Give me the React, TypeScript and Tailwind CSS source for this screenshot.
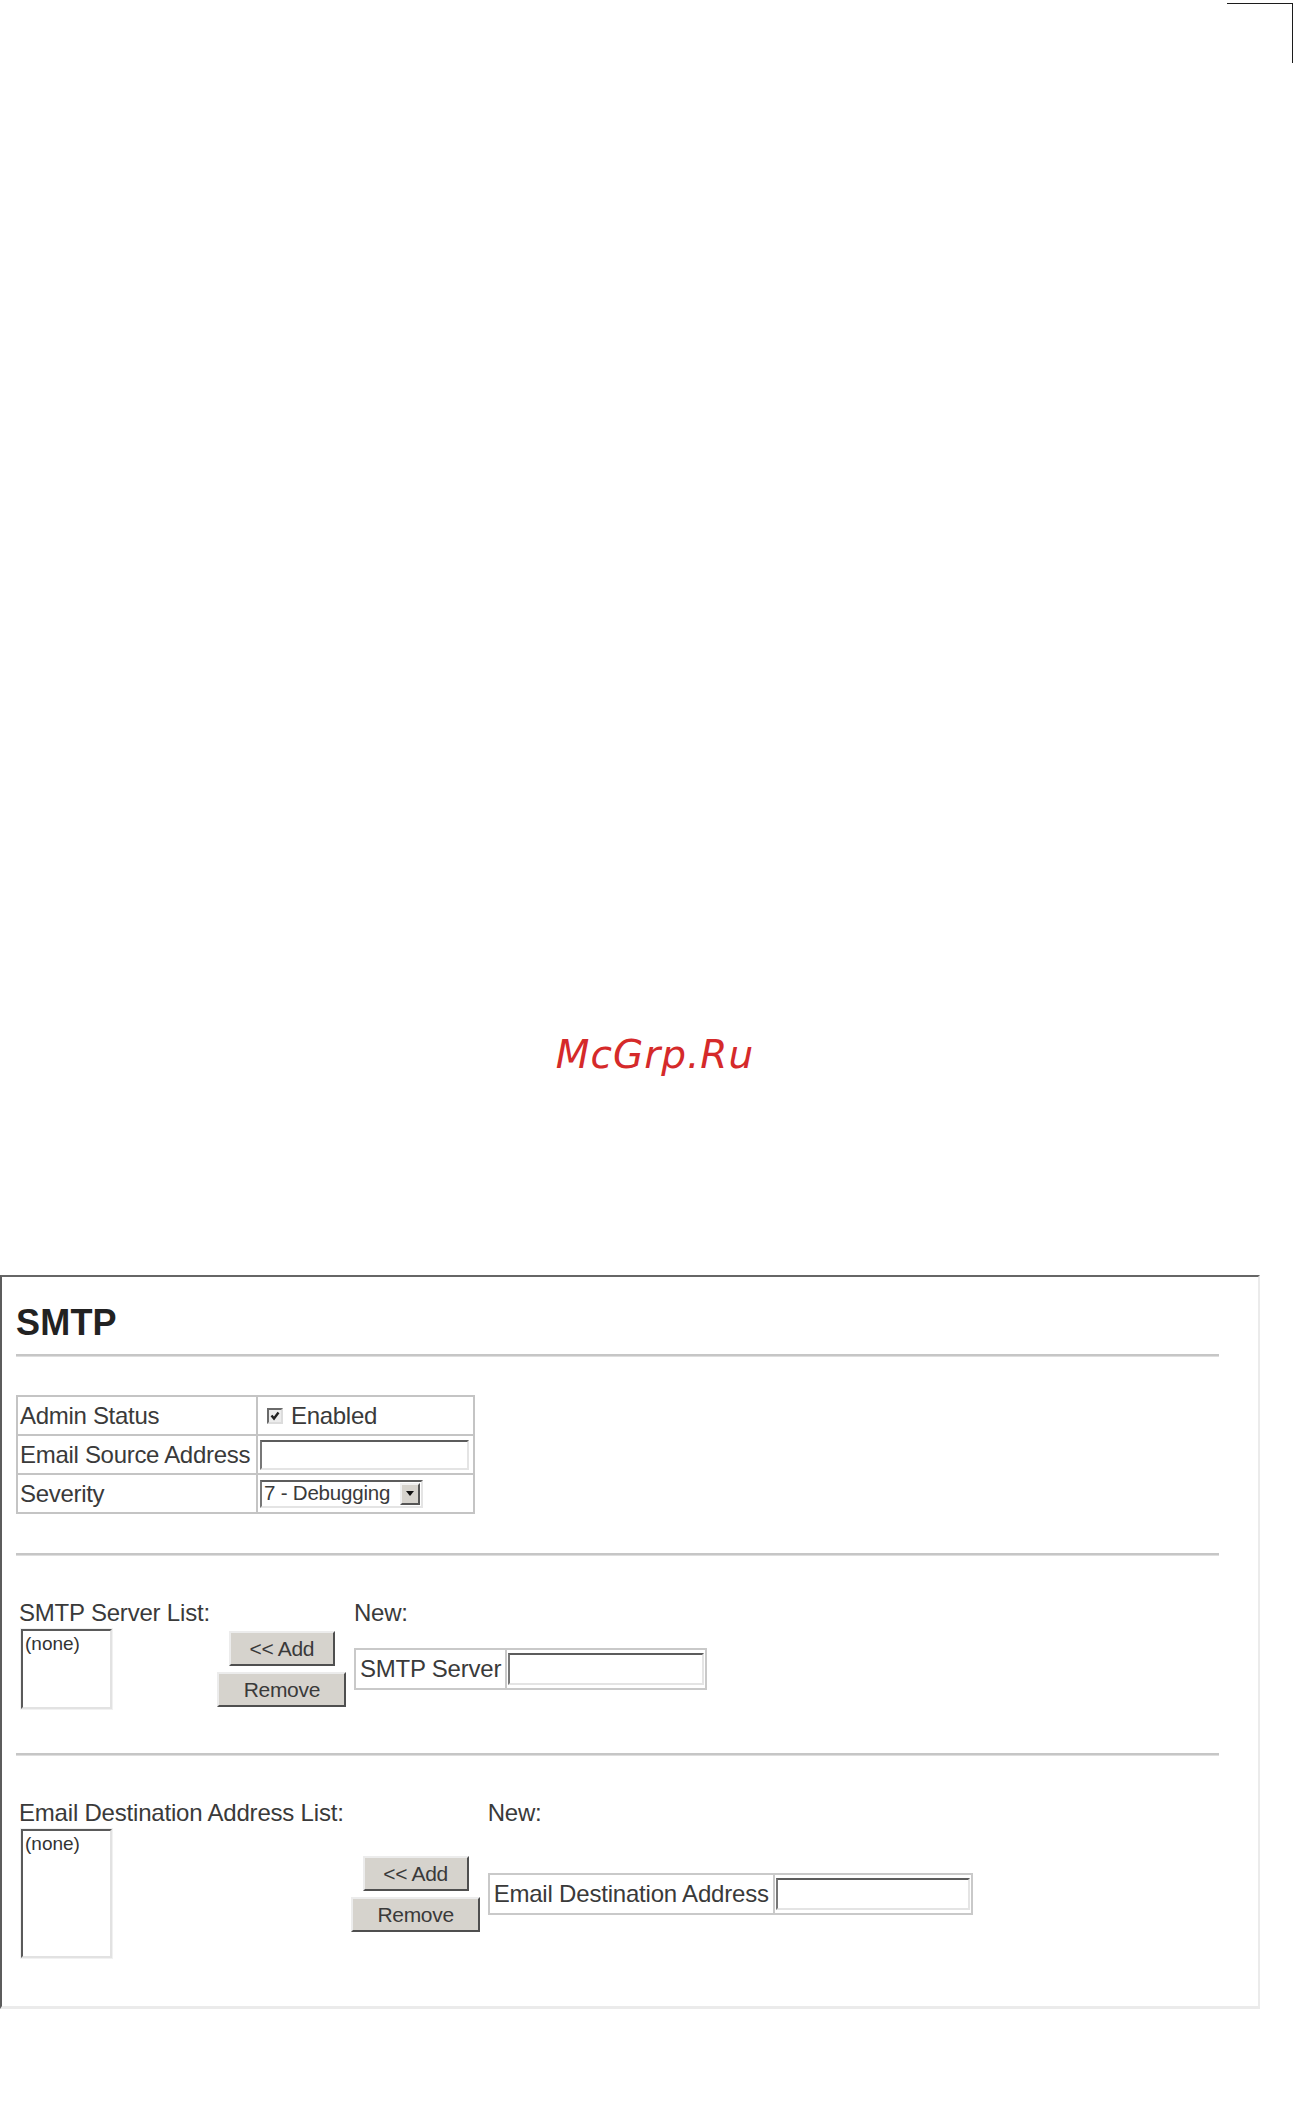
import type { ReactNode } from "react"

const sans = "font-['Liberation_Sans',Arial,sans-serif]"

function Rule() {
  return <div className="h-[3px] bg-[#c6c6c6] border-b border-[#dedede]" />
}

function TextBox({ w }: { w: string }) {
  return (
    <div
      className={`${w} h-[32px] bg-white border-2 border-t-[#5c5c5c] border-l-[#777777] border-r-[#e4e4e4] border-b-[#e4e4e4]`}
    />
  )
}

function ListBox({ h }: { h: string }) {
  return (
    <div className="p-[1px] bg-[#f1f1f1] w-[93px]">
      <div
        className={`${h} bg-white border-2 border-t-[#5a5a5a] border-l-[#5a5a5a] border-r-[#e2e2e2] border-b-[#e2e2e2] px-[2px] pt-[3px] text-[19px] leading-[20px] text-[#333]`}
      >
        (none)
      </div>
    </div>
  )
}

function Btn({ w, children }: { w: string; children: ReactNode }) {
  return (
    <button
      className={`${w} h-[35px] bg-[#d6d3cd] border-2 border-t-[#ececec] border-l-[#ececec] border-r-[#4f4f4f] border-b-[#4f4f4f] text-[21px] leading-none text-[#3a3a3a] tracking-[-0.3px]`}
    >
      {children}
    </button>
  )
}

function FieldTable({ label, inputW }: { label: string; inputW: string }) {
  return (
    <div className="inline-grid grid-cols-[auto_auto] gap-[2px] p-[2px] bg-[#c9c9c9]">
      <div className="bg-white h-[38px] px-[4px] flex items-center text-[24px] tracking-[-0.2px] text-[#3a3a3a]">
        {label}
      </div>
      <div className="bg-white h-[38px] px-[1px] flex items-center">
        <TextBox w={inputW} />
      </div>
    </div>
  )
}

function ListSection({
  title,
  listH,
  label,
  inputW,
}: {
  title: string
  listH: string
  label: string
  inputW: string
}) {
  return (
    <div className="grid grid-cols-[auto_144px_auto] justify-start items-center gap-y-[2px]">
      <div className="pl-[3px] text-[24px] leading-[26px] text-[#3a3a3a] tracking-[-0.2px]">
        {title}
      </div>
      <div />
      <div className="text-[24px] leading-[26px] text-[#3a3a3a] tracking-[-0.2px]">New:</div>
      <div className="pl-[4px]">
        <ListBox h={listH} />
      </div>
      <div className="flex flex-col items-center gap-[6px]">
        <Btn w="w-[106px]">&lt;&lt; Add</Btn>
        <Btn w="w-[129px]">Remove</Btn>
      </div>
      <div>
        <FieldTable label={label} inputW={inputW} />
      </div>
    </div>
  )
}

export default function App() {
  return (
    <div className={`w-[1296px] h-[2107px] bg-white ${sans} overflow-hidden`}>
      <div className="flex justify-end pt-[3px] pr-[3px]">
        <div className="w-[66px] h-[60px] border-t-[1.5px] border-r-[1.5px] border-[#1c1c1c]" />
      </div>

      <p className="mt-[972px] pl-[14px] text-center font-['DejaVu_Sans',sans-serif] italic text-[39px] leading-none tracking-[1px] text-[#d52a2a]">
        McGrp.Ru
      </p>

      <section className="mt-[201px] w-[1260px] border-t-2 border-l-2 border-t-[#666666] border-l-[#5c5c5c] border-r-2 border-b-[3px] border-r-[#ebebeb] border-b-[#ebebeb] pl-[14px] pr-[39px] pt-[28px] pb-[47px]">
        <h1 className="text-[36px] leading-none font-bold text-[#222] tracking-[0.2px]">SMTP</h1>
        <div className="mt-[13px]">
          <Rule />
        </div>

        <div className="mt-[38px] inline-grid grid-cols-[238px_215px] gap-[2px] p-[2px] bg-[#c4c4c4] text-[24px] tracking-[-0.3px] text-[#3a3a3a]">
          <div className="bg-white h-[37px] pl-[2px] flex items-center">Admin Status</div>
          <div className="bg-white h-[37px] pl-[9px] flex items-center gap-[8px]">
            <span className="w-[16px] h-[16px] bg-[#ececec] border-2 border-t-[#6a6a6a] border-l-[#6a6a6a] border-r-[#dcdcdc] border-b-[#dcdcdc] flex items-center justify-center">
              <svg width="10" height="10" viewBox="0 0 10 10">
                <path d="M1.5 4.5 L4 7.5 L8.5 1.5" fill="none" stroke="#222" strokeWidth="2.4" />
              </svg>
            </span>
            <span>Enabled</span>
          </div>

          <div className="bg-white h-[37px] pl-[2px] flex items-center whitespace-nowrap">Email Source Address</div>
          <div className="bg-white h-[37px] pl-[2px] flex items-center">
            <div className="w-[209px] h-[30px] bg-white border-2 border-t-[#5c5c5c] border-l-[#777777] border-r-[#e4e4e4] border-b-[#e4e4e4]" />
          </div>

          <div className="bg-white h-[37px] pl-[2px] flex items-center">Severity</div>
          <div className="bg-white h-[37px] pl-[2px] flex items-center">
            <div className="w-[163px] h-[28px] flex items-stretch border-2 border-t-[#5c5c5c] border-l-[#777777] border-r-[#e4e4e4] border-b-[#e4e4e4] bg-white">
              <span className="flex-1 flex items-center pl-[2px] text-[20.5px] text-[#3a3a3a] tracking-[-0.2px]">
                7 - Debugging
              </span>
              <span className="w-[20px] m-[1px] bg-[#d6d3cd] border-2 border-t-[#f0f0f0] border-l-[#f0f0f0] border-r-[#555] border-b-[#555] flex items-center justify-center">
                <svg width="8" height="5" viewBox="0 0 8 5">
                  <path d="M0 0 H8 L4 5 Z" fill="#111" />
                </svg>
              </span>
            </div>
          </div>
        </div>

        <div className="mt-[39px]">
          <Rule />
        </div>

        <div className="mt-[44px]">
          <ListSection title="SMTP Server List:" listH="h-[80px]" label="SMTP Server" inputW="w-[196px]" />
        </div>

        <div className="mt-[43px]">
          <Rule />
        </div>

        <div className="mt-[44px]">
          <ListSection
            title="Email Destination Address List:"
            listH="h-[129px]"
            label="Email Destination Address"
            inputW="w-[194px]"
          />
        </div>
      </section>
    </div>
  )
}
